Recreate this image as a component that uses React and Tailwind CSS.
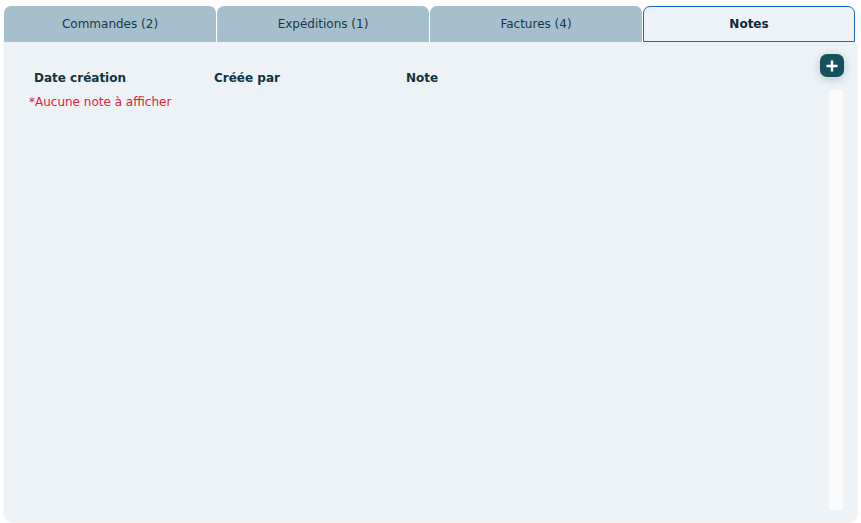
import React, { useState } from 'react';

const tabs = [
  { id: 'commandes', label: 'Commandes (2)' },
  { id: 'expeditions', label: 'Expéditions (1)' },
  { id: 'factures', label: 'Factures (4)' },
  { id: 'notes', label: 'Notes' },
];

const App = () => {
  const [activeTab, setActiveTab] = useState('notes');

  return (
    <div className="w-[861px] h-[523px] bg-white pt-[6px] pl-[4px] font-['DejaVu_Sans',sans-serif]">
      {/* Tabs */}
      <div className="flex gap-px w-[852px]">
        {tabs.map((tab) => (
          <button
            key={tab.id}
            onClick={() => setActiveTab(tab.id)}
            className={`w-[212px] h-[36px] rounded-t-[7px] text-[12px] ${
              activeTab === tab.id
                ? 'bg-[#edf2f6] border border-[#1a63c4] font-bold text-[#0d2a36]'
                : 'bg-[#a6bfcc] text-[#143a47]'
            }`}
          >
            {tab.label}
          </button>
        ))}
      </div>

      {/* Panel */}
      <div className="w-[853px] h-[480px] bg-[#edf2f6] rounded-b-[10px] shadow-[0_1px_3px_rgba(0,0,0,0.08)] flex pt-[12px] pr-[13px]">
        <div className="flex-1 pl-[25px] pt-[15px]">
          <div className="flex pl-[5px] text-[12px] font-bold text-[#0f3340] leading-[18px]">
            <div className="w-[180px]">Date création</div>
            <div className="w-[192px]">Créée par</div>
            <div>Note</div>
          </div>
          <div className="mt-[6px] text-[12px] text-[#d3253a] leading-[18px]">*Aucune note à afficher</div>
        </div>
        <div className="w-[24px] flex flex-col items-end">
          <button className="w-[24px] h-[23px] rounded-[7px] bg-[#15505f] flex items-center justify-center shadow-[0_2px_8px_rgba(20,60,90,0.25)]">
            <svg width="14" height="14" viewBox="0 0 14 14">
              <path d="M7 1.5v11M1.5 7h11" stroke="white" strokeWidth="2.4" strokeLinecap="butt" />
            </svg>
          </button>
          <div className="mt-[13px] w-[14px] mr-[1px] h-[420px] bg-[#fafafa]" />
        </div>
      </div>
    </div>
  );
};

export default App;
